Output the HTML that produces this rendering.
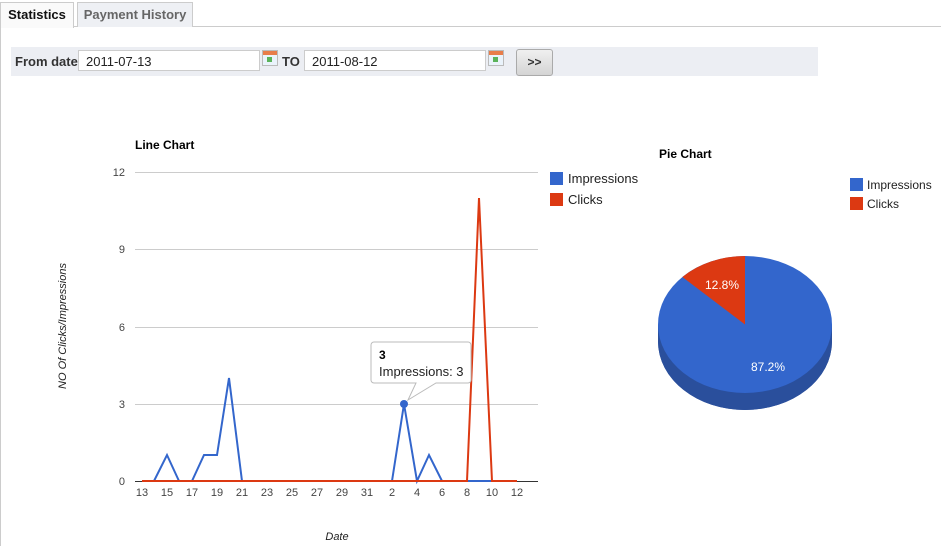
<!DOCTYPE html>
<html><head><meta charset="utf-8"><style>
body{margin:0;width:941px;height:546px;overflow:hidden;background:#fff;font-family:"Liberation Sans",sans-serif;position:relative}
.tab{position:absolute;top:2px;height:24px;border:1px solid #ccc;border-bottom:none;font-weight:bold;font-size:13px;line-height:24px;text-align:center}
.inp{position:absolute;top:50px;height:21px;background:#fff;border:1px solid #ccc;font-size:13px;line-height:21px;padding-left:7px;box-sizing:border-box;color:#222}
.cal{position:absolute;top:50px;width:14px;height:14px;border:1px solid #bbb;background:linear-gradient(#e87d4a 0 4px,#eaf3fb 4px)}
.cal:after{content:"";position:absolute;left:4px;top:6px;width:5px;height:5px;background:#5ab35a}
</style></head><body>
<div style="position:absolute;left:0;top:26px;width:941px;height:1px;background:#ccc"></div>
<div style="position:absolute;left:0;top:26px;width:1px;height:520px;background:#ccc"></div>
<div class="tab" style="left:0;width:72px;background:#fafafa;color:#111;height:25px">Statistics</div>
<div class="tab" style="left:77px;width:114px;background:#eef0f4;color:#666">Payment History</div>
<div style="position:absolute;left:11px;top:47px;width:807px;height:29px;background:#eceef3"></div>
<div style="position:absolute;left:15px;top:54px;font-weight:bold;font-size:13px;color:#333">From date</div>
<div class="inp" style="left:78px;width:182px">2011-07-13</div>
<div class="cal" style="left:262px"></div>
<div style="position:absolute;left:282px;top:54px;font-weight:bold;font-size:13px;color:#333">TO</div>
<div class="inp" style="left:304px;width:182px">2011-08-12</div>
<div class="cal" style="left:488px"></div>
<div style="position:absolute;left:516px;top:49px;width:35px;height:25px;border:1px solid #aaa;border-radius:3px;background:linear-gradient(#f0f0f0,#d4d4d4);font-weight:bold;font-size:12px;line-height:25px;text-align:center;color:#333">&gt;&gt;</div>
<svg width="941" height="546" style="position:absolute;left:0;top:0" font-family="Liberation Sans,sans-serif">
<text x="135" y="149" font-size="12" font-weight="bold">Line Chart</text>
<g stroke="#ccc" stroke-width="1">
<line x1="135" x2="538" y1="172.5" y2="172.5"/><line x1="135" x2="538" y1="249.5" y2="249.5"/><line x1="135" x2="538" y1="327.5" y2="327.5"/><line x1="135" x2="538" y1="404.5" y2="404.5"/>
</g>
<line x1="135" x2="538" y1="481.5" y2="481.5" stroke="#333"/>
<g font-size="11" fill="#444" text-anchor="end"><text x="125" y="176">12</text><text x="125" y="253">9</text><text x="125" y="331">6</text><text x="125" y="408">3</text><text x="125" y="485">0</text></g>
<g font-size="11" fill="#444" text-anchor="middle">
<text x="142" y="496">13</text><text x="167" y="496">15</text><text x="192" y="496">17</text><text x="217" y="496">19</text><text x="242" y="496">21</text><text x="267" y="496">23</text><text x="292" y="496">25</text><text x="317" y="496">27</text><text x="342" y="496">29</text><text x="367" y="496">31</text><text x="392" y="496">2</text><text x="417" y="496">4</text><text x="442" y="496">6</text><text x="467" y="496">8</text><text x="492" y="496">10</text><text x="517" y="496">12</text></g>
<text x="337" y="540" font-size="11" font-style="italic" text-anchor="middle" fill="#222">Date</text>
<text transform="translate(66,326) rotate(-90)" font-size="11" font-style="italic" text-anchor="middle" fill="#222">NO Of Clicks/Impressions</text>
<polyline fill="none" stroke="#3366cc" stroke-width="2" points="142,481 154,481 167,455 179,481 192,481 204,455 217,455 229,378 242,481 392,481 404,404 417,481 429,455 442,481 517,481"/>
<polyline fill="none" stroke="#dc3912" stroke-width="2" points="142,481 467,481 479,198 492,481 517,481"/>
<circle cx="404" cy="404" r="4" fill="#3366cc"/>
<path d="M374 342 h94 a3 3 0 0 1 3 3 v35 a3 3 0 0 1 -3 3 h-32 l-28 17 l8 -17 h-42 a3 3 0 0 1 -3 -3 v-35 a3 3 0 0 1 3 -3z" fill="#fff" stroke="#bbb"/>
<text x="379" y="359" font-size="12" font-weight="bold">3</text>
<text x="379" y="376" font-size="13" fill="#222">Impressions: 3</text>
<rect x="550" y="172" width="13" height="13" fill="#3366cc"/><text x="568" y="183" font-size="13" fill="#222">Impressions</text>
<rect x="550" y="193" width="13" height="13" fill="#dc3912"/><text x="568" y="204" font-size="13" fill="#222">Clicks</text>
<text x="659" y="158" font-size="12" font-weight="bold">Pie Chart</text>
<rect x="850" y="178" width="13" height="13" fill="#3366cc"/><text x="867" y="189" font-size="12" fill="#222">Impressions</text>
<rect x="850" y="197" width="13" height="13" fill="#dc3912"/><text x="867" y="208" font-size="12" fill="#222">Clicks</text>
<path d="M658 324.5 v17 a87 68.5 0 0 0 174 0 v-17z" fill="#2a4f9c"/>
<ellipse cx="745" cy="341.5" rx="87" ry="68.5" fill="#2a4f9c"/>
<ellipse cx="745" cy="324.5" rx="87" ry="68.5" fill="#3366cc"/>
<path d="M745 324.5 L745 256 A87 68.5 0 0 0 682.4 277 Z" fill="#dc3912"/>
<text x="722" y="289" font-size="12" fill="#fff" text-anchor="middle">12.8%</text>
<text x="768" y="371" font-size="12" fill="#fff" text-anchor="middle">87.2%</text>
</svg>
</body></html>
